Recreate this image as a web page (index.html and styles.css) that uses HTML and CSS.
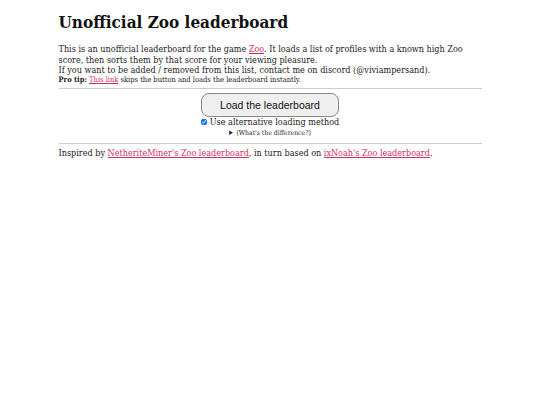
FILE: index.html
```html
<!DOCTYPE html>
<html lang="en">
<head>
<meta charset="utf-8">
<title>Unofficial Zoo leaderboard</title>
<link rel="stylesheet" href="styles.css">
</head>
<body>
<main class="page">
  <h1 class="title">Unofficial Zoo leaderboard</h1>
  <p class="intro">This is an unofficial leaderboard for the game <a href="#">Zoo</a>. It loads a list of profiles with a known high Zoo score, then sorts them by that score for your viewing pleasure.<br>If you want to be added / removed from this list, contact me on discord (@viviampersand).</p>
  <p class="tip"><b>Pro tip:</b> <a href="#">This link</a> skips the button and loads the leaderboard instantly.</p>
  <hr class="rule">
  <div class="loader">
    <button class="load-btn" type="button">Load the leaderboard</button>
    <label class="alt"><input type="checkbox" checked class="alt-box"> Use alternative loading method</label>
    <details class="diff"><summary>(What's the difference?)</summary></details>
  </div>
  <hr class="rule rule-bottom">
  <p class="footer">Inspired by <a href="#">NetheriteMiner's Zoo leaderboard</a>, in turn based on <a href="#">ixNoah's Zoo leaderboard</a>.</p>
</main>
</body>
</html>
```
FILE: styles.css
```css
html, body { margin: 0; padding: 0; background: #fff; }
body { font-family: "DejaVu Serif Condensed", "DejaVu Serif", serif; color: #222; font-size: 9px; line-height: 10.5px; }
.page { width: 423px; margin: 0 auto; padding-top: 10px; }
.title { font-size: 17px; line-height: 24px; margin: 0 0 10px; color: #111; font-weight: bold; }
.intro { margin: 0; }
.tip { margin: 0; font-size: 7.5px; line-height: 8px; }
a { color: #d0305f; }
.rule { border: 0; border-top: 1px solid #ccc; margin: 4px 0 4px; }
.rule-bottom { margin-top: 5px; }
.loader { display: flex; flex-direction: column; align-items: center; }
.load-btn { font-family: "Liberation Sans", Arial, sans-serif; font-size: 10.5px; width: 138px; height: 24px; border: 1px solid #888; border-radius: 8px; background: #efefef; color: #111; }
.alt { display: flex; align-items: center; gap: 2px; margin-top: 0; }
.alt-box { width: 6px; height: 6px; margin: 0 1px 0 0; accent-color: #1a73e8; }
.diff { font-size: 6.8px; line-height: 10px; margin-top: 1px; }
.diff summary { cursor: pointer; }
.footer { margin: 4px 0 0; }
```
